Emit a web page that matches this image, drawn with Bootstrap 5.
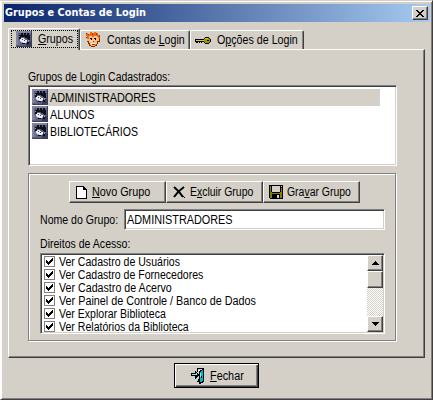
<!DOCTYPE html>
<html lang="pt-BR">
<head>
<meta charset="utf-8">
<title>Grupos e Contas de Login</title>
<meta name="viewport" content="width=device-width, initial-scale=1">
<link href="https://cdn.jsdelivr.net/npm/bootstrap@5.3.0/dist/css/bootstrap.min.css" rel="stylesheet">
<style>
:root{--face:#d4d0c8;--shade:#808080;--dark:#404040}
body{background:var(--face);font-family:"Liberation Sans",Arial,sans-serif;font-size:12px;line-height:13px;color:#000;width:433px;height:400px;overflow:hidden}
.win{width:433px;height:400px;background:var(--face);border:1px solid;border-color:var(--face) var(--dark) var(--dark) #fff;padding:3px 2px 0;box-shadow:inset 0 1px #fff,inset 1px 0 #fff,inset -1px -1px var(--shade)}
.caption{height:18px;background:linear-gradient(90deg,#0a246a,#a6caf0);color:#fff;font:bold 11px/18px "DejaVu Sans Condensed","DejaVu Sans",sans-serif;padding:0 2px 0 1px;margin-left:1px}
.t{display:inline-block;white-space:nowrap;transform-origin:0 50%}
.t u{text-underline-offset:1px;text-decoration-thickness:1px}
.sheet>div>.t,.item .t,.field .t,.rights-label .t,.right-row .t,.default .t{translate:0 1px}
.s87{transform:scaleX(.87)}.s88{transform:scaleX(.88)}.s89{transform:scaleX(.89)}.s90{transform:scaleX(.9)}.s91{transform:scaleX(.905)}.s98{transform:scaleX(.985)}
.g4{margin-left:4px}.g5{margin-left:5px}.g6{margin-left:6px}
.raised{background:var(--face);border:1px solid;border-color:#fff var(--dark) var(--dark) #fff;box-shadow:inset -1px -1px var(--shade);border-radius:0;color:#000;padding:0}
.sunken{background:#fff;border:1px solid;border-color:var(--shade) #fff #fff var(--shade);box-shadow:inset 1px 1px var(--dark),inset -1px -1px var(--face);padding:2px}
.closer{width:16px;height:14px;line-height:0}
svg{display:block;flex:none}
.strip{padding:6px 0 0 5px;height:27px}
.tabx{height:19px;border:1px solid;border-color:#fff var(--dark) transparent #fff;border-bottom:0;border-radius:2px 2px 0 0;box-shadow:inset -1px 0 var(--shade);background:var(--face);padding-left:4px}
.tabx.on{height:22px;margin-bottom:-1px;z-index:1;width:72px;padding:1px 2px 0 2px}
.wide2{width:110px}.wide3{width:114px}
.focusbox{border:1px dotted #000;height:18px;width:67px;padding-left:4px}
.sheet{width:417px;height:309px;margin-left:5px;border:1px solid;border-color:#fff var(--dark) var(--dark) #fff;box-shadow:inset -1px -1px var(--shade);padding:20px 0 0 19px}
.groups{width:369px;height:81px;margin-top:2px;padding:3px}
.item{height:17px}
.item .name{padding-left:2px;height:17px;line-height:17px;width:332px}
.item.sel .name{background:var(--face)}
.frame{width:368px;height:168px;margin-top:7px;border:1px solid var(--shade);box-shadow:inset 1px 1px #fff,1px 1px #fff;padding:7px 0 0 11px}
.tools{padding-left:29px}
.tool{width:97px;height:22px;padding-left:5px}
.field{margin-top:6px}
.field-label{width:84px}
.entry{width:261px;height:21px;line-height:14px}
.rights-label{margin-top:7px}
.rights{width:345px;height:81px;margin-top:3px;padding:0}
.rights-list{padding:1px 0 0 1px;height:78px}
.right-row{height:13px;padding-left:2px}
.box{width:11px;height:11px;border:1px solid var(--shade);margin-right:4px}
.bar{width:16px;margin:1px;background:repeating-conic-gradient(#fff 0 25%,var(--face) 0 50%) 0 0/2px 2px}
.bar .raised{height:16px}
.bar .thumb{height:17px}
.default{width:85px;height:25px;border:1px solid #000;border-radius:0;background:var(--face);box-shadow:inset 1px 1px #fff,inset -1px -1px var(--dark),inset -2px -2px var(--shade);padding:0 0 0 16px;margin:5px 0 0 171px}
</style>
<script src="https://cdn.jsdelivr.net/npm/bootstrap@5.3.0/dist/js/bootstrap.bundle.min.js"></script>
</head>
<body>
<svg width="0" height="0" class="position-absolute" aria-hidden="true" shape-rendering="crispEdges">
  <symbol id="grp" viewBox="0 0 16 16">
    <path fill="#5e5e80" d="M0 0h16v16H0z"/><path fill="#8484a0" d="M0 0h15v2H0zM0 2h2v12H0z"/><path fill="#74748f" d="M2 9h2v5H2z"/><path fill="#3c3c58" d="M15 0h1v16H1v-1h14zM11 10h4v5h-5v-3h1z"/>
    <path fill="#10101c" d="M3 4h2V2h2v2h1V2h2v2h1V2h2v2h1v5h-2V8h-1V7H9V6H5v2H3z"/>
    <path fill="#e8eef4" d="M5 7h3v1h1v1h2v2h-1v1H7v-1H5v-1H4V8h1z"/><path fill="#88a0b8" d="M4 10h1v1h2v1H5v-1H4zM3 5h1v1H3zM10 11h2v1h-2zM12 9h1v2h-1z"/>
    <path fill="#d04020" d="M8 7h1v1H8z"/><path fill="#345" d="M6 8h1v1H6zM8 9h1v1H8z"/><path fill="#10101c" d="M11 11h2v2h-2zM6 12h3v1H6z"/>
  </symbol>
  <symbol id="chk" viewBox="0 0 9 9"><path d="M1 3h1v1h1v1h1V4h1V3h1V2h1V1h1v3H7v1H6v1H5v1H4v1H3V7H2V6H1z"/></symbol>
</svg>
<div class="win">
  <div class="caption d-flex align-items-center justify-content-between">
    <span class="t s98">Grupos e Contas de Login</span>
    <button class="raised closer d-flex justify-content-center align-items-center" aria-label="Fechar janela"><svg width="8" height="7" viewBox="0 0 8 7" shape-rendering="crispEdges"><path d="M0 0h2v1h1v1h2V1h1V0h2v1H7v1H6v1H5v1h1v1h1v1h1v1H6V6H5V5H3v1H2v1H0V6h1V5h1V4h1V3H2V2H1V1H0z"/></svg></button>
  </div>
  <div class="strip d-flex align-items-end">
    <div class="tabx on position-relative"><div class="focusbox d-flex align-items-center"><svg width="16" height="16"><use href="#grp"/></svg><span class="t s89 g6"><u>G</u>rupos</span></div></div>
    <div class="tabx wide2 d-flex align-items-center">
      <svg width="16" height="16" viewBox="0 0 16 16" shape-rendering="crispEdges"><path fill="#803000" d="M1 6h1v4h1v2h1v2h2v1h4v-1h2v-2h1v-2h2V5H1z"/><path fill="#ffb878" d="M2 5h12v4h-2v3h-1v1h-1v1H6v-1H5v-2H4V9H2z"/><path fill="#f06810" d="M1 1h2v1h2V0h2v1h2V0h2v1h2v2h2v3h-2V5h-1V4H9v1H7V4H4v3H2V4H1z"/><path fill="#b03000" d="M1 1h1v1H1zM3 2h1v1H3zM7 1h1v2H7zM11 1h1v2h-1zM14 3h1v2h-1z"/><path fill="#ffd8a0" d="M5 8h3v2H5z"/><path fill="#000" d="M5 6h2v1H5zM9 6h2v1H9zM6 7h1v1H6zM10 7h1v1h-1z"/><path fill="#fff" d="M6 11h4v1H6z"/><path fill="#c02010" d="M7 12h3v1H7zM8 9h1v1H8z"/></svg>
      <span class="t s89 g6">Contas de <u>L</u>ogin</span></div>
    <div class="tabx wide3 d-flex align-items-center">
      <svg width="16" height="16" viewBox="0 0 16 16" shape-rendering="crispEdges"><path fill="#000" d="M10 5h4v1h1v1h1v3h-1v1h-1v1h-4v-1H9v-1H7v1H6v-1H5v1H4v-1H3v1H1v-1H0V7h9V6h1z"/><path fill="#a09800" d="M10 6h4v1h1v3h-1v1h-4v-1H9V9H1V8h8V7h1z"/><path fill="#d8d020" d="M10 6h3v1h-3zM1 8h8v1H1z"/><path fill="#000" d="M12 8h2v1h-2z"/></svg>
      <span class="t s89 g6">O<u>p</u>ções de Login</span></div>
  </div>
  <div class="sheet">
    <div><span class="t s87">Grupos de Login Cadastrados:</span></div>
    <div class="groups sunken">
      <div class="item sel d-flex"><svg width="16" height="16"><use href="#grp"/></svg><div class="name"><span class="t s91">ADMINISTRADORES</span></div></div>
      <div class="item d-flex"><svg width="16" height="16"><use href="#grp"/></svg><div class="name"><span class="t s90">ALUNOS</span></div></div>
      <div class="item d-flex"><svg width="16" height="16"><use href="#grp"/></svg><div class="name"><span class="t s88">BIBLIOTECÁRIOS</span></div></div>
    </div>
    <div class="frame">
      <div class="tools d-flex">
        <button class="tool raised d-flex align-items-center"><svg width="13" height="16" viewBox="0 0 13 16" shape-rendering="crispEdges"><path d="M1 2h8v1h1v1h1v1h1v10H1z"/><path fill="#fff" d="M2 3h6v3h3v8H2z"/></svg><span class="t s90 g4"><u>N</u>ovo Grupo</span></button>
        <button class="tool raised d-flex align-items-center"><svg width="14" height="14" viewBox="0 0 14 14"><path d="M2 2q5 4 9 10M12 2Q6 6 2 12" fill="none" stroke="#000" stroke-width="2"/><path d="M10 10l3 3" stroke="#000"/></svg><span class="t s87 g4">E<u>x</u>cluir Grupo</span></button>
        <button class="tool raised d-flex align-items-center"><svg width="14" height="14" viewBox="0 0 14 14" shape-rendering="crispEdges"><path d="M0 0h14v14H1v-1H0z"/><path fill="#808000" d="M1 1h1v6h1v1h8V7h1V3h1v10h-2V9H3v4H1z"/><path fill="#d4d0c8" d="M3 1h8v6H3zM12 1h1v1h-1zM8 10h2v3H8z"/></svg><span class="t s87 g4">Gra<u>v</u>ar Grupo</span></button>
      </div>
      <div class="field d-flex align-items-center"><div class="field-label"><span class="t s88">Nome do Grupo:</span></div><div class="entry sunken"><span class="t s91">ADMINISTRADORES</span></div></div>
      <div class="rights-label"><span class="t s88">Direitos de Acesso:</span></div>
      <div class="rights sunken d-flex">
        <div class="rights-list flex-grow-1 overflow-hidden">
          <div class="right-row d-flex align-items-center"><div class="box"><svg width="9" height="9"><use href="#chk"/></svg></div><span class="t s88">Ver Cadastro de Usuários</span></div>
          <div class="right-row d-flex align-items-center"><div class="box"><svg width="9" height="9"><use href="#chk"/></svg></div><span class="t s88">Ver Cadastro de Fornecedores</span></div>
          <div class="right-row d-flex align-items-center"><div class="box"><svg width="9" height="9"><use href="#chk"/></svg></div><span class="t s89">Ver Cadastro de Acervo</span></div>
          <div class="right-row d-flex align-items-center"><div class="box"><svg width="9" height="9"><use href="#chk"/></svg></div><span class="t s90">Ver Painel de Controle / Banco de Dados</span></div>
          <div class="right-row d-flex align-items-center"><div class="box"><svg width="9" height="9"><use href="#chk"/></svg></div><span class="t s88">Ver Explorar Biblioteca</span></div>
          <div class="right-row d-flex align-items-center"><div class="box"><svg width="9" height="9"><use href="#chk"/></svg></div><span class="t s88">Ver Relatórios da Biblioteca</span></div>
        </div>
        <div class="bar d-flex flex-column">
          <div class="raised d-flex justify-content-center align-items-center"><svg width="7" height="4" viewBox="0 0 7 4" shape-rendering="crispEdges"><path d="M3 0h1v1h1v1h1v1h1v1H0V3h1V2h1V1h1z"/></svg></div>
          <div class="raised thumb"></div>
          <div class="raised mt-auto d-flex justify-content-center align-items-center"><svg width="7" height="4" viewBox="0 0 7 4" shape-rendering="crispEdges"><path d="M0 0h7v1H6v1H5v1H4v1H3V3H2V2H1V1H0z"/></svg></div>
        </div>
      </div>
    </div>
  </div>
  <button class="default d-flex align-items-center"><svg width="14" height="16" viewBox="0 0 14 16" shape-rendering="crispEdges"><path d="M6 0h7v14h-1v1h-2v1H8V3h1V2h2V1H7v3H6zM0 5h4V3h1v1h1v1h1v1h1v2H7v1H6v1H5v1H4V8H0z"/><path fill="#00b8c0" d="M9 4h1V3h1V2h1v11h-1v1H9z"/><path fill="#80f0f0" d="M9 5h1v4H9zM1 6h4V5h1v2H1z"/><path fill="#fff" d="M7 2h2v1H7z"/><path d="M10 8h1v2h-1zM7 11h1v3H6v-1h1z"/></svg><span class="t s91 g5"><u>F</u>echar</span></button>
</div>
</body>
</html>
